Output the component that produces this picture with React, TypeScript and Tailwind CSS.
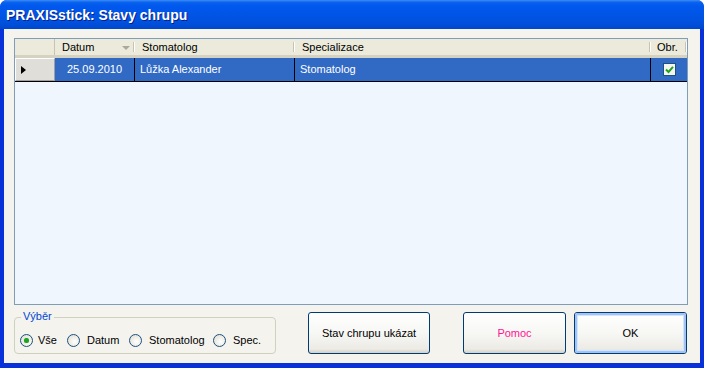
import React from "react";

function Radio({ checked }: { checked?: boolean }) {
  return (
    <span className="relative inline-flex h-[13px] w-[13px] shrink-0 items-center justify-center rounded-full border border-[#1c5180] bg-[radial-gradient(circle_at_60%_60%,#ffffff_0%,#f0efe8_45%,#dcd9ce_100%)]">
      {checked && <span className="h-[5px] w-[5px] rounded-full bg-[#21a121] shadow-[0_0_1px_#5ed15e]" />}
    </span>
  );
}

function XPButton({ children, className = "", def = false }: { children: React.ReactNode; className?: string; def?: boolean }) {
  return (
    <div
      className={
        "flex items-center justify-center rounded-[3px] border border-[#003c74] bg-[linear-gradient(to_bottom,#ffffff_0%,#f7f7f4_50%,#ecebe6_90%,#d6d0c5_100%)] " +
        className
      }
    >
      <div
        className={
          "flex h-full w-full items-center justify-center rounded-[2px] " +
          (def ? "border-2 border-[#a4c2f4] shadow-[inset_0_0_0_1px_#cee7ff]" : "")
        }
      >
        {children}
      </div>
    </div>
  );
}

export default function App() {
  return (
    <div className="h-[368px] w-[704px] bg-white font-['Liberation_Sans',Arial,sans-serif] text-[11px] text-black">
      <div className="flex h-full flex-col overflow-hidden rounded-t-[7px] bg-[#0831d9]">
        {/* Title bar */}
        <div className="flex h-[29px] shrink-0 items-center bg-[linear-gradient(to_bottom,#3d8df5_0%,#0a62ef_8%,#0058ee_20%,#0055e5_50%,#0050dc_80%,#0047cc_100%)] pl-[6px] pt-[1px]">
          <span className="text-[14px] font-bold text-white [text-shadow:1px_1px_0_#0a1e8a]">PRAXISstick: Stavy chrupu</span>
        </div>
        {/* Client */}
        <div className="mx-[4px] mb-[5px] flex flex-1 flex-col bg-[#f4f3ee] px-[10px] pt-[9px]">
          {/* Grid */}
          <div className="flex h-[267px] w-[674px] flex-col border border-[#7f9db9] bg-[#f0f6fd]">
            {/* Header */}
            <div className="flex h-[19px] shrink-0 border-b-[3px] border-b-[#d6d2c2] bg-[#ebeadb]">
              <div className="w-[40px] border-r border-[#c7c5b2] bg-[#ebeadb]" />
              <div className="relative flex w-[80px] items-center pl-[7px]">
                <span>Datum</span>
                <span className="absolute left-[67px] top-[7px] h-0 w-0 border-l-[4px] border-r-[4px] border-t-[4px] border-l-transparent border-r-transparent border-t-[#aca899]" />
                <span className="absolute right-0 top-[3px] h-[10px] w-[2px] border-l border-r border-l-[#c7c5b2] border-r-white" />
              </div>
              <div className="relative flex w-[160px] items-center pl-[7px]">
                <span>Stomatolog</span>
                <span className="absolute right-0 top-[3px] h-[10px] w-[2px] border-l border-r border-l-[#c7c5b2] border-r-white" />
              </div>
              <div className="relative flex w-[356px] items-center pl-[7px]">
                <span>Specializace</span>
                <span className="absolute right-0 top-[3px] h-[10px] w-[2px] border-l border-r border-l-[#c7c5b2] border-r-white" />
              </div>
              <div className="relative flex w-[36px] items-center pl-[6px]">
                <span>Obr.</span>
                <span className="absolute right-0 top-[3px] h-[10px] w-[2px] border-l border-r border-l-[#c7c5b2] border-r-white" />
              </div>
            </div>
            {/* Row */}
            <div className="flex h-[24px] shrink-0 border-b border-black">
              <div className="flex w-[40px] items-center border border-b-[#a0a0a0] border-l-white border-r-[#a0a0a0] border-t-white bg-[#dfded8] pl-[5px]">
                <span className="h-0 w-0 border-b-[4px] border-l-[5px] border-t-[4px] border-b-transparent border-l-black border-t-transparent" />
              </div>
              <div className="flex w-[80px] items-center justify-center border-r border-black bg-[#316ac5] text-white">25.09.2010</div>
              <div className="flex w-[160px] items-center border-r border-black bg-[#316ac5] pl-[5px] text-white">Lůžka Alexander</div>
              <div className="flex w-[356px] items-center border-r border-black bg-[#316ac5] pl-[5px] text-white">Stomatolog</div>
              <div className="flex w-[36px] items-center justify-center bg-[#316ac5]">
                <span className="flex h-[13px] w-[13px] items-center justify-center border border-[#1c5180] bg-[#f4f4f0]">
                  <svg width="9" height="9" viewBox="0 0 9 9">
                    <path d="M1 4.5 L3.5 7 L8 1.8" fill="none" stroke="#21a121" strokeWidth="2" />
                  </svg>
                </span>
              </div>
            </div>
          </div>
          {/* Bottom */}
          <div className="mt-[7px] flex items-start">
            <div className="relative mt-[5px] h-[37px] w-[262px] rounded-[4px] border border-[#d0d0bf]">
              <span className="absolute left-[6px] top-[-8px] bg-[#f4f3ee] px-[2px] leading-[13px] text-[#0046d5]">Výběr</span>
              <div className="mt-[14px] flex items-center pl-[5px]">
                <div className="flex w-[47px] items-center">
                  <Radio checked />
                  <span className="ml-[5px]">Vše</span>
                </div>
                <div className="flex w-[62px] items-center">
                  <Radio />
                  <span className="ml-[7px]">Datum</span>
                </div>
                <div className="flex w-[84px] items-center">
                  <Radio />
                  <span className="ml-[7px]">Stomatolog</span>
                </div>
                <div className="flex items-center">
                  <Radio />
                  <span className="ml-[7px]">Spec.</span>
                </div>
              </div>
            </div>
            <XPButton className="ml-[32px] h-[42px] w-[122px]">Stav chrupu ukázat</XPButton>
            <XPButton className="ml-[33px] h-[42px] w-[103px]">
              <span className="text-[#ff1493]">Pomoc</span>
            </XPButton>
            <XPButton className="ml-[8px] h-[42px] w-[113px]" def>
              OK
            </XPButton>
          </div>
        </div>
      </div>
    </div>
  );
}
